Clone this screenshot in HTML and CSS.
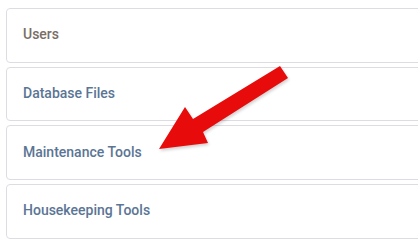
FILE: index.html
```html
<!DOCTYPE html>
<html>
<head>
<meta charset="utf-8">
<link rel="stylesheet" href="styles.css">
</head>
<body>
<div class="viewport">
  <div class="list">
    <div class="card"><span class="label label-muted">Users</span></div>
    <div class="card"><span class="label">Database Files</span></div>
    <div class="card"><span class="label">Maintenance Tools</span></div>
    <div class="card"><span class="label">Housekeeping Tools</span></div>
  </div>
</div>
<svg class="arrow" width="418" height="240" viewBox="0 0 418 240">
  <polygon points="280,66 288,78 203,132 208,143 159,149 185,107 193,119" fill="#e80b0b"/>
</svg>
</body>
</html>
```
FILE: styles.css
```css
html, body {
  margin: 0;
  background: #ffffff;
}
body {
  padding: 8px 0 0 6px;
  font-family: Roboto, "Liberation Sans", sans-serif;
  overflow: hidden;
  width: 418px;
  height: 240px;
  box-sizing: border-box;
  position: relative;
}
.viewport {
  width: 412px;
  overflow: hidden;
}
.list {
  display: flex;
  flex-direction: column;
  gap: 4px;
  width: 440px;
}
.card {
  box-sizing: border-box;
  height: 54.67px;
  border: 1px solid #dddce3;
  border-radius: 4px;
  display: flex;
  align-items: center;
  padding-left: 16px;
  padding-bottom: 2px;
}
.label {
  font-size: 14px;
  font-weight: 500;
  color: #5b7595;
}
.label-muted {
  color: #786e65;
}
.arrow {
  position: absolute;
  left: 0;
  top: 0;
  filter: drop-shadow(1px 2px 1.5px rgba(0,0,0,0.18));
}
```
